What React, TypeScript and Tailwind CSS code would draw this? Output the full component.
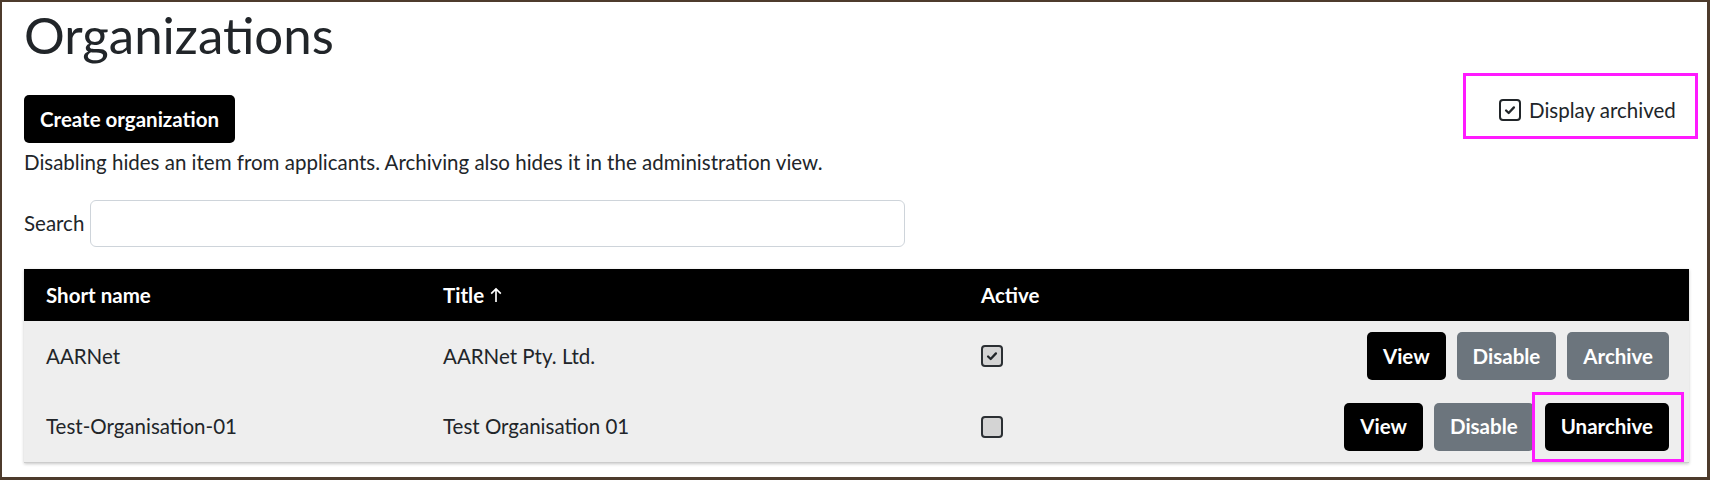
import React from "react";

type Org = {
  shortName: string;
  title: string;
  active: boolean;
  archived: boolean;
};

const orgs: Org[] = [
  { shortName: "AARNet", title: "AARNet Pty. Ltd.", active: true, archived: false },
  { shortName: "Test-Organisation-01", title: "Test Organisation 01", active: false, archived: true },
];

const Check = () => (
  <svg viewBox="0 0 16 16" className="w-[14px] h-[14px]" fill="none">
    <path d="M3.5 8.5l3 3 6-6.5" stroke="currentColor" strokeWidth="2.6" strokeLinecap="round" strokeLinejoin="round" />
  </svg>
);

const Btn = ({ children, tone }: { children: React.ReactNode; tone: "dark" | "gray" }) => (
  <button
    className={
      "h-[48px] px-[16px] rounded-[5px] text-[20.5px] font-bold text-white leading-none " +
      (tone === "dark" ? "bg-black" : "bg-[#6c757d]")
    }
  >
    {children}
  </button>
);

export default function App() {
  return (
    <div
      className="h-[480px] bg-white border-t-2 border-l-2 border-r-[3px] border-b-[3px] border-[#4d3b2c] text-[#212529] overflow-hidden"
      style={{ fontFamily: "Lato, 'Noto Sans', sans-serif" }}
    >
      <div className="pl-[22px] pr-[17px]">
        <h1 className="text-[51px] leading-[1.2] mt-[2px] font-normal">Organizations</h1>

        <div className="flex items-start justify-between mt-[8px]">
          <button className="mt-[22px] h-[48px] px-[16px] rounded-[5px] bg-black text-white font-bold text-[20.5px] leading-none">
            Create organization
          </button>
          <div className="w-[235px] h-[66px] -mr-[8px] border-[3px] border-[#ff1aff] flex items-center pl-[33px] pt-[8px] gap-[8px]">
            <span className="w-[22px] h-[22px] rounded-[4px] border-2 border-[#212529] flex items-center justify-center text-[#212529]">
              <Check />
            </span>
            <span className="text-[20.5px]">Display archived</span>
          </div>
        </div>

        <p className="text-[20.5px] leading-[30px] mt-[4px]">
          Disabling hides an item from applicants. Archiving also hides it in the administration view.
        </p>

        <div className="flex items-center gap-[6px] mt-[23px]">
          <label className="text-[20.5px]">Search</label>
          <input className="w-[815px] h-[47px] border border-[#ced4da] rounded-[6px] outline-none" />
        </div>

        <div className="mt-[22px] mr-[1px] bg-[#eeeeee] border-b border-[#cccccc] shadow-[0_1px_3px_rgba(0,0,0,0.22)]">
          <div className="grid grid-cols-[397px_538px_1fr] items-center h-[52px] bg-black text-white font-bold text-[20.5px] pl-[22px]">
            <div>Short name</div>
            <div className="flex items-center gap-[5px]">
              Title
              <svg viewBox="0 0 16 18" className="w-[14px] h-[18px]" fill="none">
                <path d="M8 17V2M2.5 7.5L8 2l5.5 5.5" stroke="currentColor" strokeWidth="1.9" />
              </svg>
            </div>
            <div>Active</div>
          </div>
          {orgs.map((o, i) => (
            <div
              key={o.shortName}
              className={
                "grid grid-cols-[397px_538px_1fr_auto] items-center pl-[22px] pr-[20px] text-[20.5px] " +
                (i === 0 ? "h-[70px]" : "h-[71px]")
              }
            >
              <div>{o.shortName}</div>
              <div>{o.title}</div>
              <div>
                <span className="w-[22px] h-[22px] rounded-[4px] border-2 border-[#2b2f33] bg-[#d4d4d4] flex items-center justify-center text-[#212529]">
                  {o.active && <Check />}
                </span>
              </div>
              <div className="flex items-center gap-[11px]">
                <Btn tone="dark">View</Btn>
                <Btn tone="gray">Disable</Btn>
                {o.archived ? (
                  <div className="relative">
                    <Btn tone="dark">Unarchive</Btn>
                    <span className="absolute -left-[13px] -right-[15px] -top-[11px] -bottom-[11px] border-[3px] border-[#ff1aff] pointer-events-none" />
                  </div>
                ) : (
                  <Btn tone="gray">Archive</Btn>
                )}
              </div>
            </div>
          ))}
        </div>
      </div>
    </div>
  );
}
